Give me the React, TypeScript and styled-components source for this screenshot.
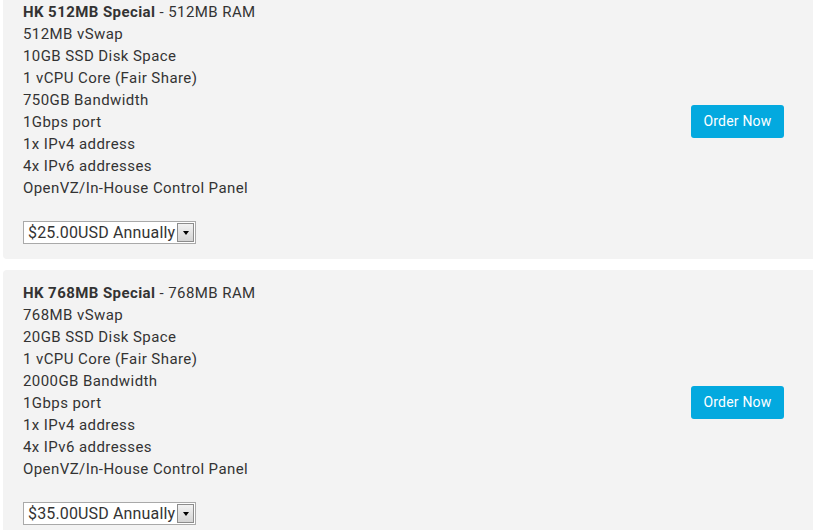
import React from 'react';
import styled, { createGlobalStyle } from 'styled-components';

interface Plan {
  id: number;
  name: string;
  ram: string;
  features: string[];
  price: string;
}

const GlobalStyle = createGlobalStyle`
  html, body {
    margin: 0;
    padding: 0;
    background: #ffffff;
    overflow: hidden;
  }
  body {
    font-family: Roboto, "Noto Sans", Arial, sans-serif;
  }
`;

const Page = styled.div`
  display: flex;
  flex-direction: column;
  gap: 11px;
  width: 830px;
  margin-top: -11px;
  padding-left: 3px;
`;

const Card = styled.div`
  display: flex;
  align-items: center;
  justify-content: space-between;
  background: #f3f3f3;
  border-radius: 4px;
  padding: 12px 49px 15px 20px;
`;

const Details = styled.div`
  display: flex;
  flex-direction: column;
`;

const Line = styled.div`
  font-size: 15px;
  line-height: 22px;
  letter-spacing: 0.42px;
  color: #333333;
`;

const PlanName = styled.strong`
  font-weight: 700;
  color: #333333;
`;

const SelectWrap = styled.div`
  position: relative;
  width: 173px;
  height: 23px;
  margin-top: 22px;
`;

const PriceSelect = styled.select`
  appearance: none;
  -webkit-appearance: none;
  width: 100%;
  height: 100%;
  margin: 0;
  padding: 0 0 0 4px;
  border: 1px solid #a9a9a9;
  border-radius: 0;
  background: #ffffff;
  font-family: Roboto, "Noto Sans", Arial, sans-serif;
  font-size: 16px;
  letter-spacing: 0.15px;
  color: #333333;
  outline: none;
`;

const ArrowBox = styled.span`
  position: absolute;
  top: 2px;
  right: 2px;
  width: 15px;
  height: 17px;
  border: 1px solid #8c8c8c;
  background: linear-gradient(#f2f2f2, #d4d4d4);
  display: flex;
  align-items: center;
  justify-content: center;
  pointer-events: none;

  &::after {
    content: '';
    border-left: 3.5px solid transparent;
    border-right: 3.5px solid transparent;
    border-top: 4px solid #000000;
  }
`;

const OrderButton = styled.button`
  width: 93px;
  height: 33px;
  border: none;
  border-radius: 3px;
  background: #03a9df;
  color: #ffffff;
  font-family: Roboto, "Noto Sans", Arial, sans-serif;
  font-size: 14px;
  letter-spacing: 0.2px;
  cursor: pointer;
  margin-bottom: 3px;
`;

const plans: Plan[] = [
  {
    id: 1,
    name: 'HK 512MB Special',
    ram: '512MB RAM',
    features: [
      '512MB vSwap',
      '10GB SSD Disk Space',
      '1 vCPU Core (Fair Share)',
      '750GB Bandwidth',
      '1Gbps port',
      '1x IPv4 address',
      '4x IPv6 addresses',
      'OpenVZ/In-House Control Panel',
    ],
    price: '$25.00USD Annually',
  },
  {
    id: 2,
    name: 'HK 768MB Special',
    ram: '768MB RAM',
    features: [
      '768MB vSwap',
      '20GB SSD Disk Space',
      '1 vCPU Core (Fair Share)',
      '2000GB Bandwidth',
      '1Gbps port',
      '1x IPv4 address',
      '4x IPv6 addresses',
      'OpenVZ/In-House Control Panel',
    ],
    price: '$35.00USD Annually',
  },
];

const App: React.FC = () => {
  return (
    <>
      <GlobalStyle />
      <Page>
        {plans.map(plan => (
          <Card key={plan.id}>
            <Details>
              <Line>
                <PlanName>{plan.name}</PlanName> - {plan.ram}
              </Line>
              {plan.features.map(feature => (
                <Line key={feature}>{feature}</Line>
              ))}
              <SelectWrap>
                <PriceSelect defaultValue={plan.price}>
                  <option>{plan.price}</option>
                </PriceSelect>
                <ArrowBox />
              </SelectWrap>
            </Details>
            <OrderButton>Order Now</OrderButton>
          </Card>
        ))}
      </Page>
    </>
  );
};

export default App;
